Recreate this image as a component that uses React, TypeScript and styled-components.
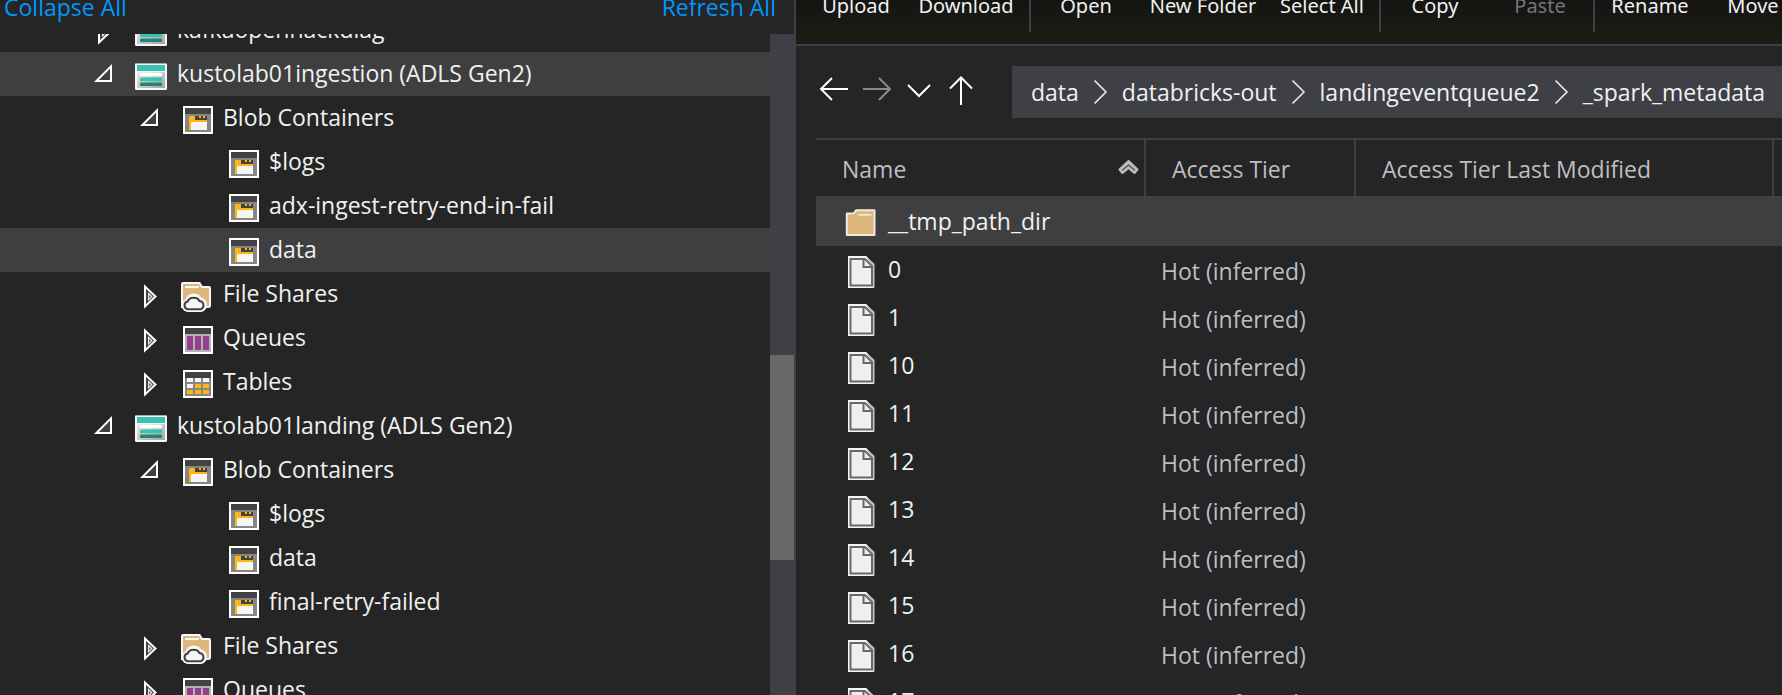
import React from 'react';
import styled, { createGlobalStyle } from 'styled-components';

const color = {
  bg: '#252526',
  active: '#3f3f40',
  chrome: '#3f3f46',
  thumb: '#686868',
  text: '#f1f1f1',
  muted: '#bcbfc2',
  disabled: '#77737f',
  link: '#0097fb',
};

const Global = createGlobalStyle`
  * { box-sizing: border-box; }
  body {
    margin: 0;
    background: ${color.bg};
    color: ${color.text};
    font-family: "Open Sans", "Noto Sans", sans-serif;
    font-size: 23px;
    overflow: hidden;
  }
  button { font: inherit; color: inherit; background: none; border: 0; padding: 0; }
`;

const Page = styled.main`
  display: flex;
  height: 100vh;
  overflow: hidden;
`;

const Explorer = styled.aside`
  display: flex;
  flex-direction: column;
  flex: 0 0 796px;
  border-right: 2px solid ${color.chrome};
`;

const ExplorerHeader = styled.div`
  display: flex;
  justify-content: space-between;
  align-items: flex-end;
  height: 34px;
  padding: 0 18px 10px 4px;
  overflow: hidden;
`;

const LinkButton = styled.button`
  color: ${color.link};
  line-height: 34px;
`;

const TreeViewport = styled.div`
  display: flex;
  flex: 1;
  min-height: 0;
  overflow: hidden;
`;

const Tree = styled.ul`
  flex: 1;
  list-style: none;
  margin: -26px 0 0;
  padding: 0;
`;

const TreeRow = styled.li<{ $level: number; $active?: boolean }>`
  display: flex;
  height: 44px;
  padding-left: ${(p) => 88 + p.$level * 46}px;
  background: ${(p) => (p.$active ? color.active : 'transparent')};
  white-space: nowrap;
`;

const Toggle = styled.button`
  width: 46px;
  height: 44px;
  flex: none;
`;

const ToggleGap = styled.span`
  width: 46px;
  flex: none;
`;

const Svg = styled.svg`
  display: block;
  flex: none;
`;

const TreeLabel = styled.span`
  margin-left: 7px;
  line-height: 42px;
`;

const ScrollTrack = styled.div`
  flex: 0 0 24px;
  background: ${color.chrome};
`;

const ScrollThumb = styled.div`
  height: 205px;
  margin-top: 321px;
  background: ${color.thumb};
`;

const Content = styled.section`
  display: flex;
  flex-direction: column;
  flex: 1;
  min-width: 0;
  overflow: hidden;
`;

const Toolbar = styled.div`
  display: flex;
  align-items: flex-end;
  flex: 0 0 46px;
  padding: 0 0 12px 12px;
  overflow: hidden;
  background: linear-gradient(#141412, #1d1d17);
  border-bottom: 2px solid ${color.chrome};
`;

const ToolButton = styled.button<{ $width: number }>`
  flex: none;
  width: ${(p) => p.$width}px;
  padding-bottom: 12px;
  font-family: "Noto Sans", sans-serif;
  font-size: 20px;
  line-height: 28px;
  text-align: center;
  white-space: nowrap;
  &:disabled { color: ${color.disabled}; }
`;

const ToolSeparator = styled.span`
  flex: 0 0 2px;
  height: 32px;
  margin: 0 1px;
  background: ${color.chrome};
`;

const NavBar = styled.nav`
  display: flex;
  align-items: center;
  flex: 0 0 92px;
  padding-left: 20px;
`;

const NavButton = styled.button<{ $off?: boolean }>`
  flex: none;
  color: ${(p) => (p.$off ? '#8a8a8b' : '#ffffff')};
`;

const Breadcrumb = styled.ol`
  display: flex;
  align-items: center;
  flex: 1;
  height: 52px;
  margin: 0 0 0 32px;
  padding: 0 0 0 19px;
  list-style: none;
  background: ${color.chrome};
  overflow: hidden;
`;

const Crumb = styled.li`
  display: flex;
  align-items: center;
  white-space: nowrap;
`;

const CrumbLink = styled.a`
  color: ${color.text};
  text-decoration: none;
  line-height: 52px;
`;

const Files = styled.table`
  width: calc(100% - 20px);
  margin-left: 20px;
  border-collapse: separate;
  border-spacing: 0;
  table-layout: fixed;
  white-space: nowrap;
`;

const Column = styled.col<{ $width?: number }>`
  width: ${(p) => (p.$width ? `${p.$width}px` : 'auto')};
`;

const HeadCell = styled.th`
  height: 60px;
  padding: 2px 4px 0 26px;
  border: solid ${color.chrome};
  border-width: 2px 2px 2px 0;
  color: ${color.muted};
  font-weight: 400;
  line-height: 30px;
  text-align: left;
  &:last-child { padding: 0; border-right: 0; }
`;

const HeadInner = styled.span`
  display: flex;
  align-items: center;
  justify-content: space-between;
`;

const FileRow = styled.tr<{ $active?: boolean }>`
  background: ${(p) => (p.$active ? color.active : 'transparent')};
`;

const Cell = styled.td`
  height: 48px;
  padding: 2px 0 0 15px;
  color: ${color.muted};
  line-height: 44px;
`;

const NameCell = styled.td`
  height: 48px;
  padding: 0 0 0 28px;
`;

const NameInner = styled.span`
  display: flex;
  gap: 8px;
  line-height: 46px;
`;

const Expanded = () => (
  <Svg width="46" height="44" viewBox="0 0 46 44" aria-hidden="true">
    <path d="M8.4 29H23V14.4Z" fill="#3f3f40" stroke="#fff" strokeWidth="2" />
  </Svg>
);

const Collapsed = () => (
  <Svg width="46" height="44" viewBox="0 0 46 44" aria-hidden="true">
    <path d="M11 14.5V34.5L21.5 24.5Z" fill="#3f3f40" stroke="#fff" strokeWidth="2" />
    <path d="M14.6 21.6V27.6L17.7 24.6Z" fill="#3f3f40" stroke="#e4e4e4" strokeWidth="1.3" />
  </Svg>
);

const IconFrame = ({ children }: { children: React.ReactNode }) => (
  <Svg width="36" height="44" viewBox="0 0 36 44" aria-hidden="true">{children}</Svg>
);

const StorageIcon = () => (
  <IconFrame>
    <defs>
      <linearGradient id="storage-body" x1="0" y1="0" x2="1" y2="1">
        <stop offset="0" stopColor="#ececec" />
        <stop offset="1" stopColor="#a4a4a4" />
      </linearGradient>
    </defs>
    <rect x="1" y="11" width="32" height="27" rx="1.5" fill="#f8f8f8" />
    <rect x="1.8" y="11" width="30.4" height="1" fill="#a9a9a9" />
    <rect x="3" y="20" width="28" height="16" fill="url(#storage-body)" />
    <rect x="3" y="13" width="28" height="6" fill="#37c2b1" />
    <rect x="6" y="20.8" width="22" height="3.4" rx=".8" fill="#fff" />
    <rect x="6" y="25.6" width="22" height="3.6" rx=".8" fill="#37c2b1" />
    <rect x="6" y="30.4" width="22" height="3.6" rx=".8" fill="#258277" />
  </IconFrame>
);

const WindowShape = ({ body }: { body: string }) => (
  <>
    <rect x="3" y="10" width="30" height="28" fill="#fff" />
    <rect x="5" y="12" width="26" height="24" fill={body} />
    <rect x="5" y="12" width="26" height="6" fill="#424242" />
  </>
);

const BlobIcon = () => (
  <IconFrame>
    <WindowShape body="#868686" />
    <rect x="9" y="20" width="18" height="14" fill="#fcb714" />
    <rect x="15" y="20" width="12" height="4" fill="#424242" />
    <rect x="19" y="20" width="2" height="2" fill="#fcb714" />
    <rect x="23" y="20" width="2" height="2" fill="#fcb714" />
    <rect x="11" y="26" width="16" height="8" fill="#f6f6f6" />
  </IconFrame>
);

const QueueIcon = () => (
  <IconFrame>
    <WindowShape body="#b3b3b3" />
    {[7, 15, 23].map((x) => (
      <rect key={x} x={x} y="20" width="6" height="14" fill="#923f8d" />
    ))}
  </IconFrame>
);

const TableIcon = () => (
  <IconFrame>
    <WindowShape body="#868686" />
    {[18, 24, 30].map((y, r) =>
      [7, 15, 23].map((x, c) => (
        <rect
          key={`${x}-${y}`}
          x={x}
          y={y}
          width="6"
          height="4"
          fill={r === 0 || (r === 1 && c === 0) ? '#f6f6f6' : '#fcb714'}
        />
      )),
    )}
  </IconFrame>
);

const ShareIcon = () => (
  <IconFrame>
    <path
      d="M3 11H19.5L22 15H29Q30 15 30 16V33.500Q30 35 28 35H2V12Q2 11 3 11Z"
      fill="#dcb67a"
      stroke="#f8f8f8"
      strokeWidth="2"
    />
    <path d="M5 15H19" stroke="#f8f8f8" strokeWidth="2" />
    <path
      d="M7.500 37.200A3.900 3.900 0 0 1 7.600 29.600Q8.800 24.300 13.800 24.300Q18.300 24.300 19.300 28.400A4.400 4.400 0 0 1 20.500 37.200Z"
      fill="#f6f6f6"
      stroke="#f8f8f8"
      strokeWidth="5.500"
      strokeLinejoin="round"
    />
    <path
      d="M7.500 37.200A3.900 3.900 0 0 1 7.600 29.600Q8.800 25.800 13.800 25.800Q18.300 25.800 19.300 29A4.200 4.200 0 0 1 20.500 37.200Z"
      fill="#f6f6f6"
      stroke="#424242"
      strokeWidth="2"
    />
  </IconFrame>
);

const FolderIcon = () => (
  <Svg width="36" height="48" viewBox="0 0 36 48" aria-hidden="true">
    <path
      d="M2.800 15.500H9.500L12 12.300H30.500V37H2.800Z"
      fill="#dcb67a"
      stroke="#eeeae3"
      strokeWidth="2"
      strokeLinejoin="round"
    />
    <path d="M14.500 16.800H27.500" stroke="#f0e6d6" strokeWidth="1.800" />
  </Svg>
);

const FileIcon = () => (
  <Svg width="36" height="48" viewBox="0 0 36 48" aria-hidden="true">
    <path d="M4 10H22L30.500 18V42H4Z" fill="#c4c4c5" />
    <path d="M4 10H22L24 12V14L29 20V42H4Z" fill="#f4f4f4" />
    <path d="M6.500 13H21L28 20V39.500H6.500Z" fill="#efeff2" stroke="#68686a" strokeWidth="2" />
    <path d="M19.500 13V21H28" fill="none" stroke="#68686a" strokeWidth="2" />
  </Svg>
);

const BackArrow = () => (
  <Svg width="32" height="40" viewBox="0 0 32 40" aria-hidden="true">
    <path d="M5 17H32M16 6L5 17L16 28" fill="none" stroke="currentColor" strokeWidth="2" />
  </Svg>
);

const ForwardArrow = () => (
  <Svg width="44" height="40" viewBox="0 0 44 40" aria-hidden="true">
    <path d="M15 17H42M31 6L42 17L31 28" fill="none" stroke="currentColor" strokeWidth="2" />
  </Svg>
);

const DownChevron = () => (
  <Svg width="44" height="40" viewBox="0 0 44 40" aria-hidden="true">
    <path d="M16 13L27 24L38 13" fill="none" stroke="currentColor" strokeWidth="2" />
  </Svg>
);

const UpArrow = () => (
  <Svg width="44" height="40" viewBox="0 0 44 40" aria-hidden="true">
    <path d="M25 33V6M14 16.500L25 5.500L36 16.500" fill="none" stroke="currentColor" strokeWidth="2" />
  </Svg>
);

const CrumbChevron = () => (
  <Svg width="43" height="28" viewBox="0 0 43 28" aria-hidden="true">
    <path d="M15.500 2.500L27 14L15.500 25.500" fill="none" stroke="#f1f1f1" strokeWidth="1.500" />
  </Svg>
);

const SortIcon = () => (
  <Svg width="22" height="22" viewBox="0 0 22 22" aria-label="Sorted ascending">
    <path
      d="M1.500 11.500L10.500 3L19.500 11.500L16.500 15L10.500 10L4.500 15Z"
      fill="#bdbdbd"
      stroke="#bdbdbd"
      strokeWidth="2"
      strokeLinejoin="round"
    />
    <path d="M4 12.500L10.500 7L17 12.500" fill="none" stroke="#555" strokeWidth="1.400" />
  </Svg>
);

type NodeKind = 'storage' | 'blob' | 'share' | 'queue' | 'table';

const nodeIcon: Record<NodeKind, React.FC> = {
  storage: StorageIcon,
  blob: BlobIcon,
  share: ShareIcon,
  queue: QueueIcon,
  table: TableIcon,
};

interface TreeNode {
  label: string;
  kind: NodeKind;
  level: number;
  open?: boolean;
  active?: boolean;
}

const nodes: TreeNode[] = [
  { label: 'kafkaopenhackdiag', kind: 'storage', level: 0, open: false },
  { label: 'kustolab01ingestion (ADLS Gen2)', kind: 'storage', level: 0, open: true, active: true },
  { label: 'Blob Containers', kind: 'blob', level: 1, open: true },
  { label: '$logs', kind: 'blob', level: 2 },
  { label: 'adx-ingest-retry-end-in-fail', kind: 'blob', level: 2 },
  { label: 'data', kind: 'blob', level: 2, active: true },
  { label: 'File Shares', kind: 'share', level: 1, open: false },
  { label: 'Queues', kind: 'queue', level: 1, open: false },
  { label: 'Tables', kind: 'table', level: 1, open: false },
  { label: 'kustolab01landing (ADLS Gen2)', kind: 'storage', level: 0, open: true },
  { label: 'Blob Containers', kind: 'blob', level: 1, open: true },
  { label: '$logs', kind: 'blob', level: 2 },
  { label: 'data', kind: 'blob', level: 2 },
  { label: 'final-retry-failed', kind: 'blob', level: 2 },
  { label: 'File Shares', kind: 'share', level: 1, open: false },
  { label: 'Queues', kind: 'queue', level: 1, open: false },
];

const tools: { label: string; width: number; disabled?: boolean }[][] = [
  [{ label: 'Upload', width: 96 }, { label: 'Download', width: 124 }],
  [{ label: 'Open', width: 108 }, { label: 'New Folder', width: 126 }, { label: 'Select All', width: 112 }],
  [{ label: 'Copy', width: 106 }, { label: 'Paste', width: 104, disabled: true }],
  [{ label: 'Rename', width: 108 }, { label: 'Move', width: 98 }],
];

const path = ['data', 'databricks-out', 'landingeventqueue2', '_spark_metadata'];
const files = ['0', '1', '10', '11', '12', '13', '14', '15', '16', '17'];

export default function App() {
  return (
    <Page>
      <Global />
      <Explorer>
        <ExplorerHeader>
          <LinkButton>Collapse All</LinkButton>
          <LinkButton>Refresh All</LinkButton>
        </ExplorerHeader>
        <TreeViewport>
          <Tree role="tree">
            {nodes.map((node, i) => {
              const Icon = nodeIcon[node.kind];
              return (
                <TreeRow
                  key={i}
                  role="treeitem"
                  aria-level={node.level + 1}
                  aria-expanded={node.open}
                  $level={node.level}
                  $active={node.active}
                >
                  {node.open === undefined ? (
                    <ToggleGap />
                  ) : (
                    <Toggle aria-label={node.open ? 'Collapse' : 'Expand'}>
                      {node.open ? <Expanded /> : <Collapsed />}
                    </Toggle>
                  )}
                  <Icon />
                  <TreeLabel>{node.label}</TreeLabel>
                </TreeRow>
              );
            })}
          </Tree>
          <ScrollTrack>
            <ScrollThumb />
          </ScrollTrack>
        </TreeViewport>
      </Explorer>

      <Content>
        <Toolbar role="toolbar">
          {tools.map((group, g) => (
            <React.Fragment key={g}>
              {g > 0 && <ToolSeparator />}
              {group.map((tool) => (
                <ToolButton key={tool.label} $width={tool.width} disabled={tool.disabled}>
                  {tool.label}
                </ToolButton>
              ))}
            </React.Fragment>
          ))}
        </Toolbar>

        <NavBar>
          <NavButton aria-label="Back"><BackArrow /></NavButton>
          <NavButton aria-label="Forward" $off><ForwardArrow /></NavButton>
          <NavButton aria-label="History"><DownChevron /></NavButton>
          <NavButton aria-label="Up"><UpArrow /></NavButton>
          <Breadcrumb>
            {path.map((part, i) => (
              <Crumb key={part}>
                {i > 0 && <CrumbChevron />}
                <CrumbLink href="#">{part}</CrumbLink>
              </Crumb>
            ))}
          </Breadcrumb>
        </NavBar>

        <Files>
          <colgroup>
            <Column $width={330} />
            <Column $width={210} />
            <Column $width={418} />
            <Column />
          </colgroup>
          <thead>
            <tr>
              <HeadCell>
                <HeadInner>
                  Name
                  <SortIcon />
                </HeadInner>
              </HeadCell>
              <HeadCell>Access Tier</HeadCell>
              <HeadCell>Access Tier Last Modified</HeadCell>
              <HeadCell />
            </tr>
          </thead>
          <tbody>
            <FileRow $active>
              <NameCell>
                <NameInner>
                  <FolderIcon />
                  __tmp_path_dir
                </NameInner>
              </NameCell>
              <Cell />
              <Cell />
              <Cell />
            </FileRow>
            {files.map((name) => (
              <FileRow key={name}>
                <NameCell>
                  <NameInner>
                    <FileIcon />
                    {name}
                  </NameInner>
                </NameCell>
                <Cell>Hot (inferred)</Cell>
                <Cell />
                <Cell />
              </FileRow>
            ))}
          </tbody>
        </Files>
      </Content>
    </Page>
  );
}
